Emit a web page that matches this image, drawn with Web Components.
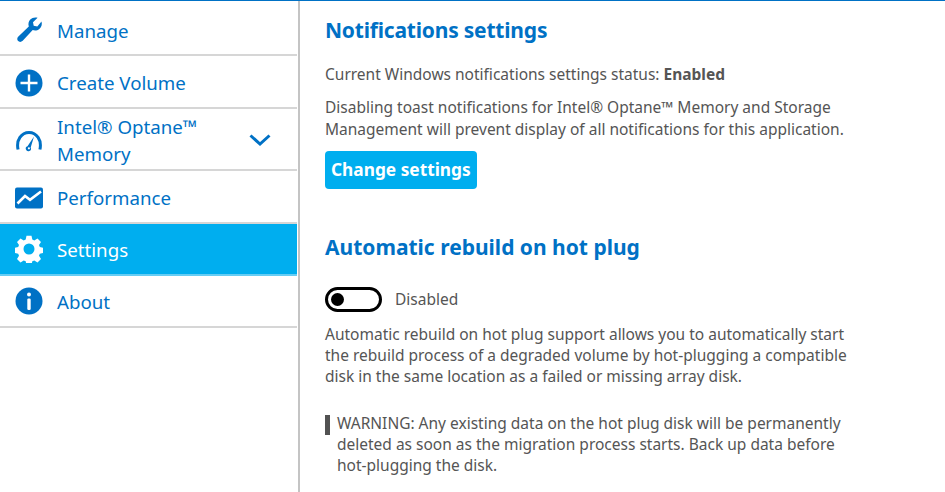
<!DOCTYPE html>
<html>
<head>
<meta charset="utf-8">
<style>
  html, body { margin: 0; height: 100%; background: #fff; overflow: hidden; }
  body { font-family: "Noto Sans", "Open Sans", sans-serif; }
</style>
</head>
<body>
<app-shell>
  <side-nav slot="nav">
    <nav-item label="Manage" icon="wrench" h="54" pad="4"></nav-item>
    <nav-item label="Create Volume" icon="plus" h="53" pad="2"></nav-item>
    <nav-item label="Intel® Optane™ Memory" icon="gauge" h="62" pad="2" expand></nav-item>
    <nav-item label="Performance" icon="chart" h="53" pad="2"></nav-item>
    <nav-item label="Settings" icon="gear" h="52" pad="0" active></nav-item>
    <nav-item label="About" icon="info" h="52" pad="0"></nav-item>
  </side-nav>
  <settings-section heading="Notifications settings">
    <p class="status">Current Windows notifications settings status: <b>Enabled</b></p>
    <p>Disabling toast notifications for Intel® Optane™ Memory and Storage<br>Management will prevent display of all notifications for this application.</p>
    <action-button>Change settings</action-button>
  </settings-section>
  <settings-section heading="Automatic rebuild on hot plug" second>
    <toggle-switch>Disabled</toggle-switch>
    <p>Automatic rebuild on hot plug support allows you to automatically start<br>the rebuild process of a degraded volume by hot-plugging a compatible<br>disk in the same location as a failed or missing array disk.</p>
    <warning-note>WARNING: Any existing data on the hot plug disk will be permanently<br>deleted as soon as the migration process starts. Back up data before<br>hot-plugging the disk.</warning-note>
  </settings-section>
</app-shell>

<script>
const ICONS = {
  wrench: `<svg width="28" height="28" viewBox="0 0 28 28"><path fill="currentColor" d="M26.500 5.500c.9 3-.1 5.800-2.200 7.500-2 1.600-4.400 1.900-6.600 1.100L7.700 24.800c-1.400 1.400-3.400 1.500-4.600.3-1.200-1.200-1.100-3.200.3-4.500l10.400-10.200c-.8-2.400-.3-4.900 1.500-6.800C17 1.600 19.900.9 22.600 1.700L18 6.200l.7 3.600 3.600.7z"/></svg>`,
  plus: `<svg width="28" height="28" viewBox="0 0 28 28"><circle cx="14" cy="14" r="13.500" fill="currentColor"/><path d="M14 5.500v17M5.500 14h17" stroke="#fff" stroke-width="2.400"/></svg>`,
  gauge: `<svg width="28" height="28" viewBox="0 0 28 28"><path fill="none" stroke="currentColor" stroke-width="3" d="M3.100 23.500C.9 14 6.500 6.500 14 6.500s13.100 7.500 10.900 17"/><path fill="currentColor" d="M19 10.500l-3.300 11a2.600 2.600 0 1 1-3.200-1.300z"/><circle cx="13.900" cy="22.300" r="1.100" fill="#fff"/></svg>`,
  chart: `<svg width="28" height="22" viewBox="0 0 28 22"><rect width="28" height="21" y=".5" rx="2" fill="currentColor"/><path fill="none" stroke="#fff" stroke-width="2.600" d="M2.500 16.500L10 9l5 3.800L26 4.500"/></svg>`,
  gear: `<svg width="28" height="28" viewBox="0 0 28 28"><path fill="currentColor" fill-rule="evenodd" d="M11.500 .8h5l.8 3.700 2 .9 3.200-2 3.500 3.500-2 3.200.8 2 3.700.8v5l-3.700.8-.8 2 2 3.200-3.500 3.500-3.200-2-2 .8-.8 3.700h-5l-.8-3.700-2-.8-3.200 2-3.500-3.500 2-3.200-.8-2-3.700-.8v-5l3.700-.8.8-2-2-3.200 3.500-3.500 3.200 2 2-.9zM14 8.500a5.500 5.500 0 1 0 0 11 5.500 5.500 0 0 0 0-11z"/></svg>`,
  info: `<svg width="28" height="28" viewBox="0 0 28 28"><circle cx="14" cy="14" r="13.500" fill="currentColor"/><circle cx="14" cy="7.500" r="2" fill="#fff"/><rect x="12.300" y="11.500" width="3.400" height="11.500" rx="1.200" fill="#fff"/></svg>`
};

class AppShell extends HTMLElement {
  constructor() {
    super();
    this.attachShadow({ mode: 'open' }).innerHTML = `
      <style>
        :host { display: grid; grid-template-columns: 300px 1fr; height: 492px; box-sizing: border-box; border-top: 1px solid #0071c5; }
        .nav { display: block; border-right: 2px solid #c4c4c4; box-sizing: border-box; padding-top: 1px; height: 491px; }
        .main { padding: 0 0 0 25px; }
      </style>
      <div class="nav"><slot name="nav"></slot></div>
      <div class="main"><slot></slot></div>`;
  }
}

class SideNav extends HTMLElement {
  constructor() {
    super();
    this.attachShadow({ mode: 'open' }).innerHTML = `
      <style>:host { display: flex; flex-direction: column; width: 297px; }</style>
      <slot></slot>`;
  }
}

class NavItem extends HTMLElement {
  connectedCallback() {
    const root = this.shadowRoot || this.attachShadow({ mode: 'open' });
    const active = this.hasAttribute('active');
    const chevron = this.hasAttribute('expand')
      ? `<svg class="chev" width="22" height="12" viewBox="0 0 22 12"><path fill="none" stroke="currentColor" stroke-width="3" d="M1.500 1.500L11 10l9.500-8.500"/></svg>` : '';
    root.innerHTML = `
      <style>
        :host { display: flex; align-items: center; box-sizing: border-box; height: ${this.getAttribute('h')}px;
          padding-top: ${this.getAttribute('pad')}px;
          border-bottom: 2px solid #d6d6d6; color: #0071c5;
          background: ${active ? '#00aeef' : 'transparent'}; }
        :host([active]) { color: #fff; border-bottom-color: #66cdf4; }
        .ico { width: 28px; margin-left: 15px; display: flex; justify-content: center; flex: none; }
        .lbl { margin-left: 14px; font-size: 18.700px; line-height: 27px; width: 172px; }
        .chev { margin-left: 20px; }
      </style>
      <span class="ico">${ICONS[this.getAttribute('icon')]}</span>
      <span class="lbl">${this.getAttribute('label')}</span>${chevron}`;
  }
}

class SettingsSection extends HTMLElement {
  connectedCallback() {
    const root = this.shadowRoot || this.attachShadow({ mode: 'open' });
    const second = this.hasAttribute('second');
    root.innerHTML = `
      <style>
        :host { display: block; padding-top: ${second ? 42 : 13}px; font-size: 15.500px; line-height: 21.300px; color: #555; }
        h2 { margin: 0 0 ${second ? 24 : 18}px; font-size: 21px; line-height: 32px; font-weight: 700; color: #0071c5;
          letter-spacing: ${second ? 0 : -0.2}px; }
        ::slotted(p) { margin: 0 0 12px; }
      </style>
      <h2>${this.getAttribute('heading')}</h2>
      <slot></slot>`;
  }
}

class ActionButton extends HTMLElement {
  constructor() {
    super();
    this.attachShadow({ mode: 'open' }).innerHTML = `
      <style>
        :host { display: inline-flex; align-items: center; height: 38px; padding: 0 6px; margin-top: -1px; border-radius: 4px;
          background: #00aeef; color: #fff; font-size: 17.300px; font-weight: 700; }
      </style>
      <slot></slot>`;
  }
}

class ToggleSwitch extends HTMLElement {
  constructor() {
    super();
    this.attachShadow({ mode: 'open' }).innerHTML = `
      <style>
        :host { display: flex; align-items: center; gap: 13px; margin-bottom: 11px; height: 26px; }
        .track { width: 57px; height: 25px; box-sizing: border-box; border: 3px solid #000; border-radius: 13px; display: flex; align-items: center; padding-left: 3px; }
        .knob { width: 13px; height: 13px; border-radius: 50%; background: #000; }
      </style>
      <span class="track"><span class="knob"></span></span>
      <span><slot></slot></span>`;
  }
}

class WarningNote extends HTMLElement {
  constructor() {
    super();
    this.attachShadow({ mode: 'open' }).innerHTML = `
      <style>
        :host { display: block; position: relative; margin-top: 25px; padding-left: 12px; }
        .bar { position: absolute; left: 0; top: 2px; width: 5px; height: 20px; background: #525252; }
      </style>
      <span class="bar"></span><slot></slot>`;
  }
}

customElements.define('app-shell', AppShell);
customElements.define('side-nav', SideNav);
customElements.define('nav-item', NavItem);
customElements.define('settings-section', SettingsSection);
customElements.define('action-button', ActionButton);
customElements.define('toggle-switch', ToggleSwitch);
customElements.define('warning-note', WarningNote);
</script>
</body>
</html>
